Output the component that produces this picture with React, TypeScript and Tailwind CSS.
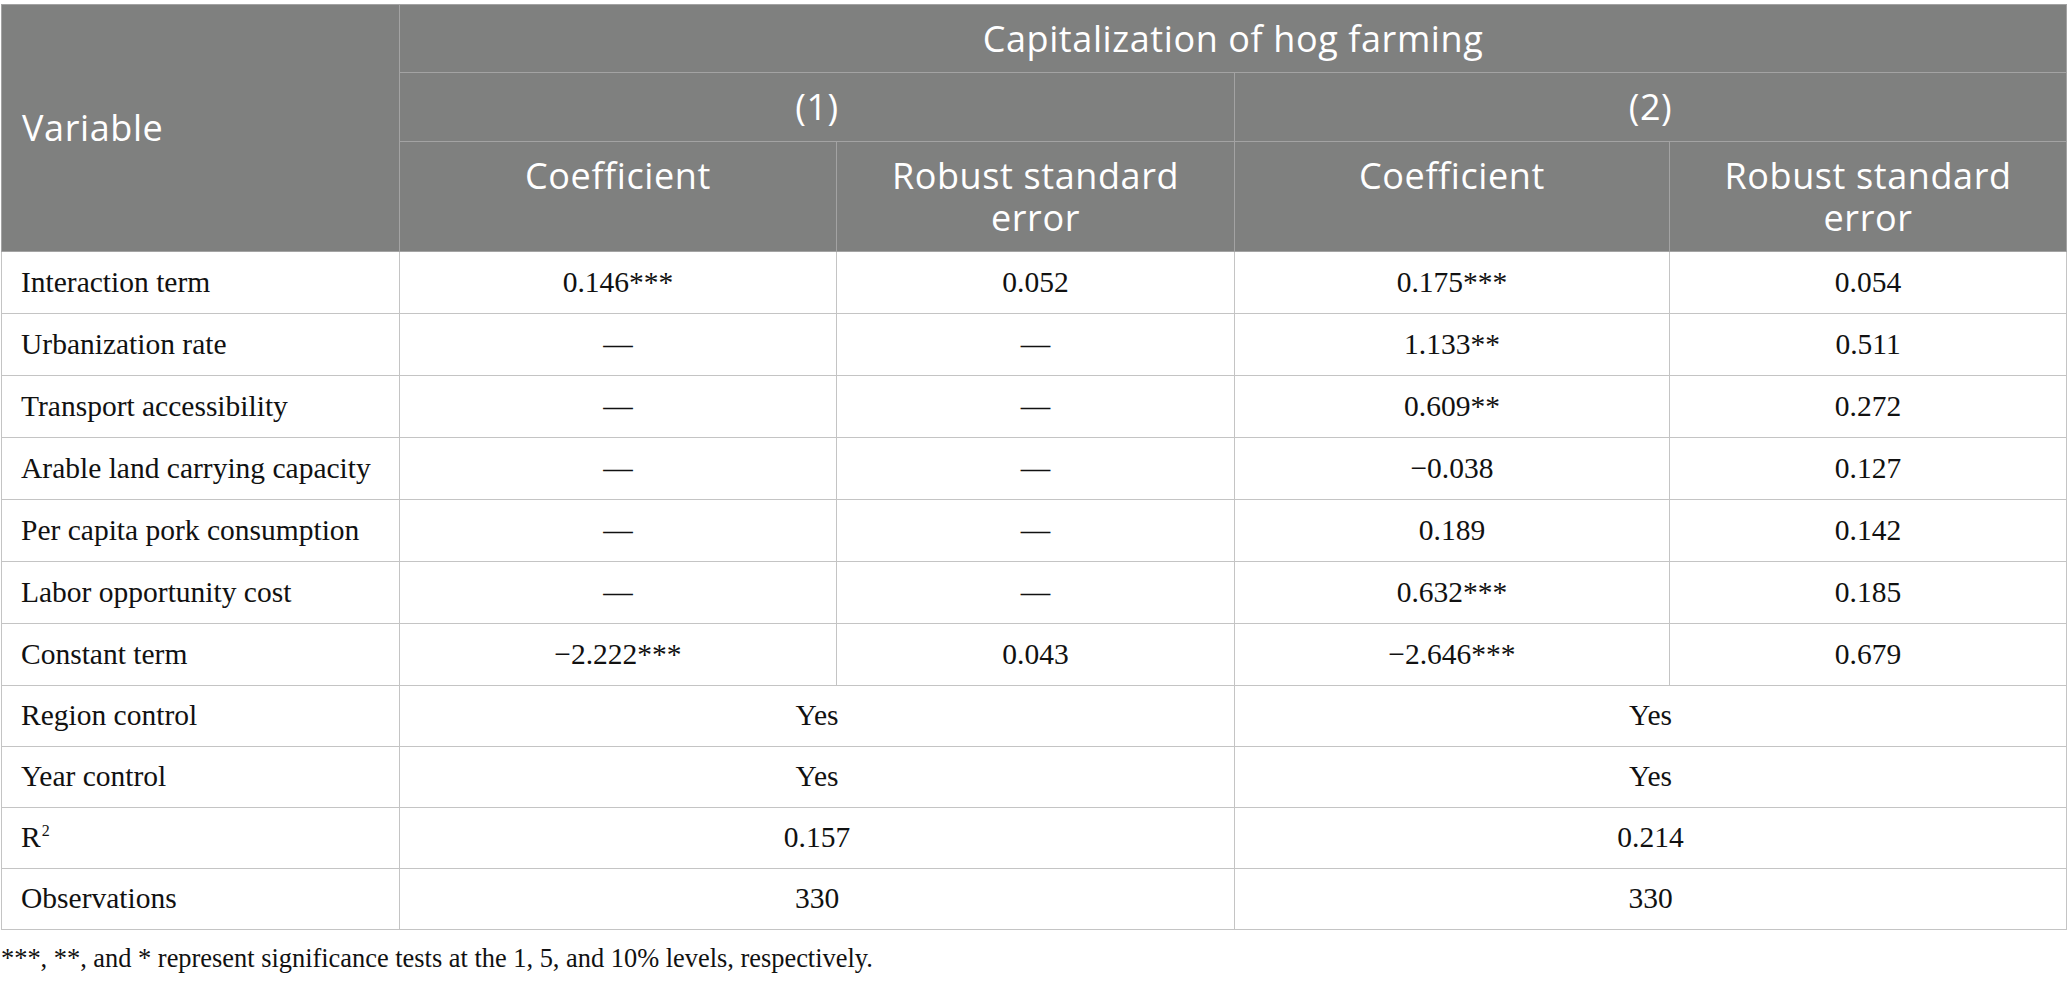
const bodyRows: { label: React.ReactNode; cells: string[] }[] = [
  { label: "Interaction term", cells: ["0.146***", "0.052", "0.175***", "0.054"] },
  { label: "Urbanization rate", cells: ["—", "—", "1.133**", "0.511"] },
  { label: "Transport accessibility", cells: ["—", "—", "0.609**", "0.272"] },
  { label: "Arable land carrying capacity", cells: ["—", "—", "−0.038", "0.127"] },
  { label: "Per capita pork consumption", cells: ["—", "—", "0.189", "0.142"] },
  { label: "Labor opportunity cost", cells: ["—", "—", "0.632***", "0.185"] },
  { label: "Constant term", cells: ["−2.222***", "0.043", "−2.646***", "0.679"] },
];

const spanRows: { label: React.ReactNode; left: string; right: string }[] = [
  { label: "Region control", left: "Yes", right: "Yes" },
  { label: "Year control", left: "Yes", right: "Yes" },
  {
    label: (
      <>
        R<sup className="text-[16px] -top-[11px] ml-[1px]">2</sup>
      </>
    ),
    left: "0.157",
    right: "0.214",
  },
  { label: "Observations", left: "330", right: "330" },
];

const th = "border border-[#a3a3a3] text-white font-normal tracking-[0.6px]";
const td = "border border-[#c4c4c4] text-center align-middle";

export default function App() {
  return (
    <div className="bg-white w-[2068px] h-[985px] pt-[4px] pl-[1px]">
      <table
        className="table-fixed border-collapse w-[2065px] text-[#111] text-[29.5px] leading-none"
        style={{ fontFamily: '"Liberation Serif", "Times New Roman", serif' }}
      >
        <colgroup>
          <col className="w-[398px]" />
          <col className="w-[437px]" />
          <col className="w-[398px]" />
          <col className="w-[435px]" />
          <col className="w-[397px]" />
        </colgroup>
        <thead
          className="bg-[#7f807f] text-[36px]"
          style={{ fontFamily: '"Open Sans", "Noto Sans", sans-serif' }}
        >
          <tr className="h-[68px]">
            <th rowSpan={3} className={`${th} text-left pl-[20px] align-middle`}>
              Variable
            </th>
            <th colSpan={4} className={`${th} text-center`}>
              Capitalization of hog farming
            </th>
          </tr>
          <tr className="h-[69px]">
            <th colSpan={2} className={`${th} text-center`}>
              (1)
            </th>
            <th colSpan={2} className={`${th} text-center`}>
              (2)
            </th>
          </tr>
          <tr className="h-[110px]">
            <th className={`${th} text-center align-top pt-[13px] leading-[42px]`}>Coefficient</th>
            <th className={`${th} text-center align-top pt-[13px] leading-[42px]`}>
              Robust standard
              <br />
              error
            </th>
            <th className={`${th} text-center align-top pt-[13px] leading-[42px]`}>Coefficient</th>
            <th className={`${th} text-center align-top pt-[13px] leading-[42px]`}>
              Robust standard
              <br />
              error
            </th>
          </tr>
        </thead>
        <tbody>
          {bodyRows.map((r, i) => (
            <tr key={i} className="h-[62px]">
              <td className={`${td} !text-left pl-[19px]`}>{r.label}</td>
              {r.cells.map((c, j) => (
                <td key={j} className={td}>
                  {c}
                </td>
              ))}
            </tr>
          ))}
          {spanRows.map((r, i) => (
            <tr key={i} className="h-[61px]">
              <td className={`${td} !text-left pl-[19px]`}>{r.label}</td>
              <td colSpan={2} className={td}>
                {r.left}
              </td>
              <td colSpan={2} className={td}>
                {r.right}
              </td>
            </tr>
          ))}
        </tbody>
      </table>
      <p
        className="mt-[15px] text-[26.4px] leading-none text-[#111]"
        style={{ fontFamily: '"Liberation Serif", "Times New Roman", serif' }}
      >
        ***, **, and * represent significance tests at the 1, 5, and 10% levels, respectively.
      </p>
    </div>
  );
}
